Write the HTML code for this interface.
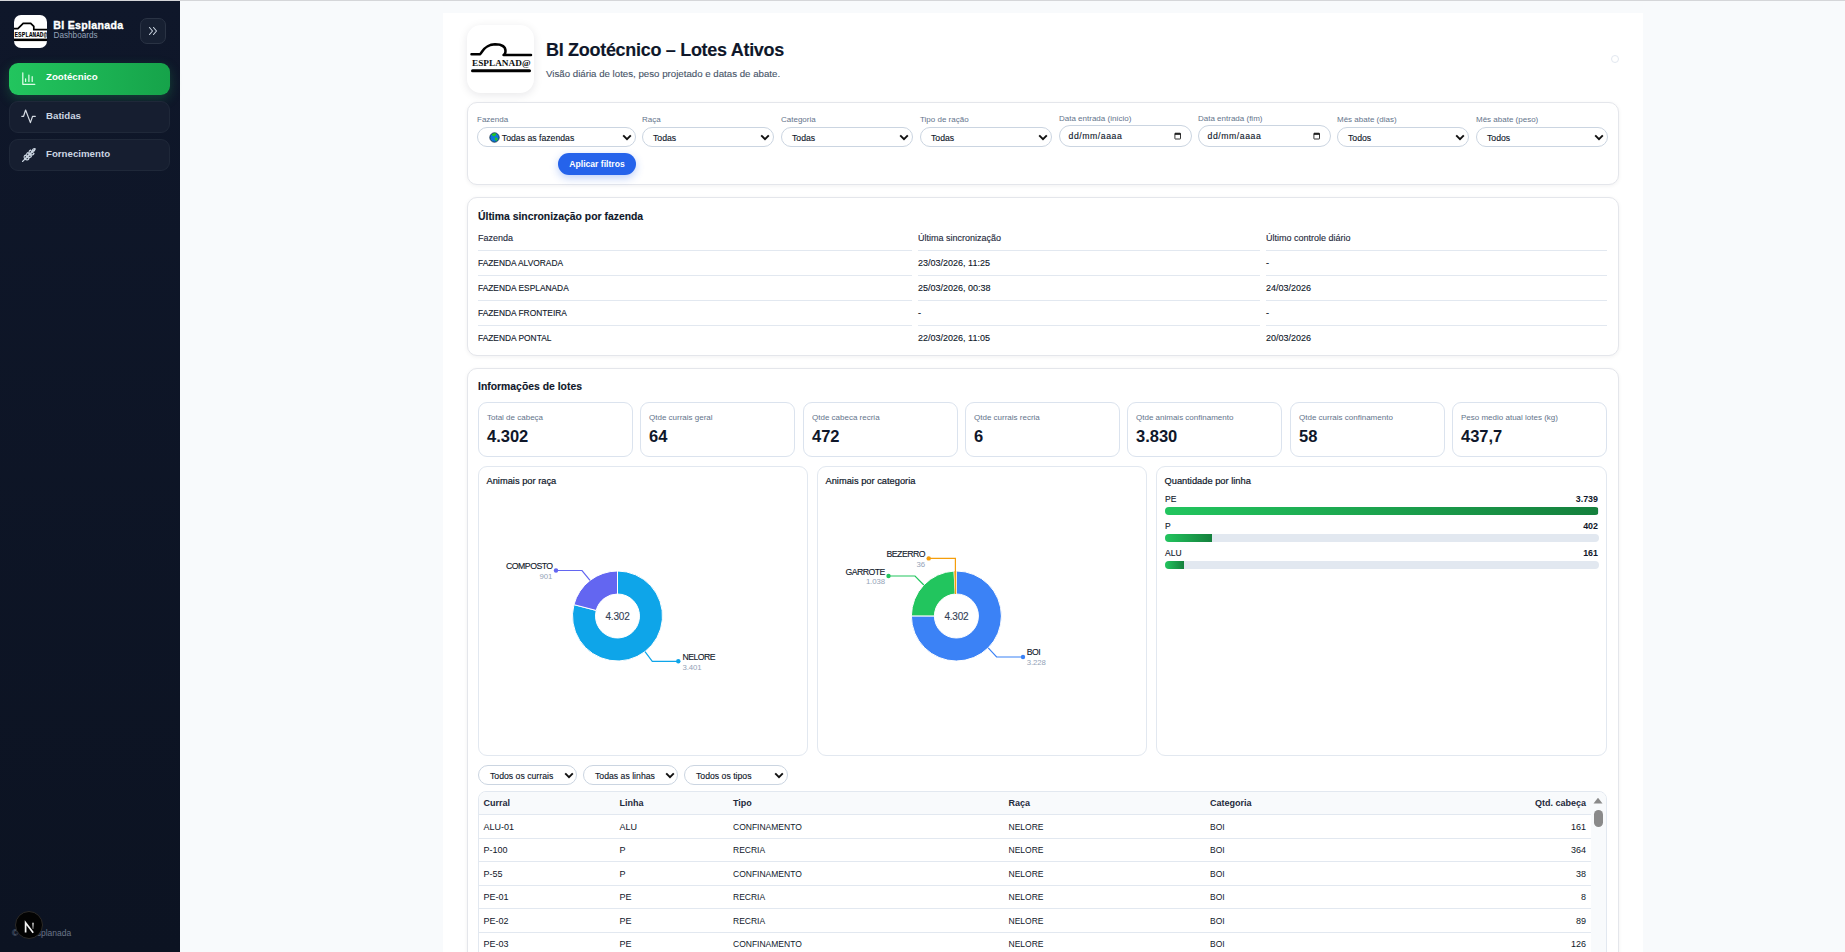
<!DOCTYPE html>
<html lang="pt-BR"><head><meta charset="utf-8"><title>BI Zootécnico</title>
<style>
*{box-sizing:border-box;margin:0;padding:0}
html,body{width:1845px;height:952px;overflow:hidden}
body{font-family:"Liberation Sans",sans-serif;background:#f8fafc;position:relative;color:#0f172a}
.abs{position:absolute}
#panel div,.card div,.ccard div,.sel span,.lbl,.kpi div{-webkit-text-stroke:0.12px currentColor}
.cttl{-webkit-text-stroke:0.2px currentColor!important}
.kv,.th2,.bv,.kl,.lbl{-webkit-text-stroke:0!important}
.ln{stroke:#0f172a;stroke-width:0.12px}.ct{stroke:#334155;stroke-width:0.12px}
.topline{left:0;top:0;width:1845px;height:1px;background:#d5d6d9}
#side{left:0;top:1px;width:180px;height:951px;background:linear-gradient(180deg,#0f172a 0%,#0c1322 100%)}
#panel{left:443px;top:13px;width:1200px;height:939px;background:#fff}
.card{position:absolute;border:1px solid #e4e6eb;border-radius:10px;background:#fff;box-shadow:0 1px 4px rgba(15,23,42,0.06)}
.lbl{position:absolute;font-size:8px;color:#64748b;white-space:nowrap}
.sel{position:absolute;height:20px;border:1px solid #cbd5e1;border-radius:10px;background:#fff;font-size:8.7px;color:#0f172a;white-space:nowrap}
.sel span{position:absolute;top:4.5px}
.chev{position:absolute;top:6px;width:10px;height:7px}
.th1{font-size:9px;color:#1e293b;white-space:nowrap}
.td1{font-size:9px;color:#0f172a;white-space:nowrap}
.bl{height:1px;background:#e2e8f0}
.kpi{position:absolute;top:33px;width:155px;height:55px;border:1px solid #dbe3ee;border-radius:9px;background:#fff}
.kl{position:absolute;left:8px;top:10px;font-size:8px;color:#64748b;white-space:nowrap}
.kv{position:absolute;left:8px;top:24px;font-size:16.5px;font-weight:bold;color:#0f172a;white-space:nowrap}
.ccard{position:absolute;border:1px solid #e2e8f0;border-radius:9px;background:#fff}
.cttl{position:absolute;left:7.5px;top:9px;font-size:9.3px;color:#0f172a;white-space:nowrap}
.ct{font-size:10px;letter-spacing:-0.2px;fill:#334155;font-family:"Liberation Sans",sans-serif}
.ln{font-size:8.7px;letter-spacing:-0.5px;fill:#0f172a;font-family:"Liberation Sans",sans-serif}
.lv{font-size:7.8px;letter-spacing:-0.1px;fill:#94a3b8;font-family:"Liberation Sans",sans-serif}
.bn{font-size:8.5px;color:#0f172a;white-space:nowrap}
.bv{font-size:8.9px;font-weight:bold;color:#0f172a;white-space:nowrap}
.th2{font-size:9px;font-weight:bold;color:#1e293b;white-space:nowrap}
.td2{font-size:9px;color:#0f172a;white-space:nowrap}
</style></head><body>
<div class="abs topline"></div>
<div id="side" class="abs">
 <div class="abs" style="left:14px;top:13.8px;width:33px;height:33px;border-radius:7px;background:#fff;overflow:hidden">
  <svg width="33" height="34" viewBox="0 0 33 34" style="position:absolute;left:0;top:0">
   <path d="M0 13.6 H3.9 L9.2 8.3 H16.7 L19.8 11.4 V14.6 H33" fill="none" stroke="#000" stroke-width="1.7"/>
   <rect x="0" y="23.6" width="33" height="2.5" fill="#000"/>
   <text x="0.5" y="21.6" font-family="Liberation Mono" font-size="6.4" font-weight="bold" fill="#000" textLength="32.5" lengthAdjust="spacingAndGlyphs">ESPLANAD@</text>
  </svg>
 </div>
 <div class="abs" style="left:53.3px;top:17.8px;font-size:10.6px;font-weight:bold;color:#fff;letter-spacing:0.3px;-webkit-text-stroke:0.35px #fff;white-space:nowrap">BI Esplanada</div>
 <div class="abs" style="left:53.5px;top:30px;font-size:8.2px;color:#94a3b8;white-space:nowrap">Dashboards</div>
 <div class="abs" style="left:140px;top:17px;width:26px;height:26px;border:1px solid #2a3344;border-radius:7px;background:#172032">
  <svg width="27" height="27" viewBox="0 0 27 27" style="position:absolute;left:-1px;top:-1px"><path d="M9.5 9.5 L12.5 13 L9.5 16.5 M13.5 9.5 L16.5 13 L13.5 16.5" fill="none" stroke="#cbd5e1" stroke-width="1.1" stroke-linecap="round" stroke-linejoin="round"/></svg>
 </div>
 <div class="abs" style="left:9px;top:62px;width:161px;height:32px;border-radius:9px;background:linear-gradient(90deg,#22c55e,#16a34a);box-shadow:0 4px 12px rgba(34,197,94,0.25)">
  <svg width="16" height="16" viewBox="0 0 16 16" style="position:absolute;left:12px;top:8px"><path d="M1.8 1.8 V13.3 H13.8 M4.6 10.4 V7.9 M7.9 10.4 V4 M11.2 10.4 V5.7" fill="none" stroke="#dcfce7" stroke-width="1.25" stroke-linecap="round" stroke-linejoin="round"/></svg>
  <div class="abs" style="left:37px;top:8px;font-size:9.7px;font-weight:bold;color:#fff;white-space:nowrap">Zootécnico</div>
 </div>
 <div class="abs" style="left:9px;top:100px;width:161px;height:32px;border-radius:9px;background:#161e30;border:1px solid #1f2839">
  <svg width="16" height="16" viewBox="0 0 16 16" style="position:absolute;left:11px;top:7px"><path d="M0.8 7.3 H2.6 L4.6 1 L9.4 13.6 L11.6 7.3 H14.3" fill="none" stroke="#d5dbe3" stroke-width="1.2" stroke-linecap="round" stroke-linejoin="round"/></svg>
  <div class="abs" style="left:36px;top:7.5px;font-size:9.7px;font-weight:bold;color:#cbd5e1;white-space:nowrap">Batidas</div>
 </div>
 <div class="abs" style="left:9px;top:138px;width:161px;height:32px;border-radius:9px;background:#161e30;border:1px solid #1f2839">
  <svg width="16" height="16" viewBox="0 0 16 16" style="position:absolute;left:11px;top:7px"><g fill="none" stroke="#cbd5e1" stroke-width="1.1" stroke-linecap="round" stroke-linejoin="round"><path d="M1.5 14.5 L14 2"/><path d="M4 12 C2.5 10.5 3 8.5 4.5 8 C6 9.5 6 11 4 12Z"/><path d="M6.5 9.5 C5 8 5.5 6 7 5.5 C8.5 7 8.5 8.5 6.5 9.5Z"/><path d="M9 7 C7.5 5.5 8 3.5 9.5 3 C11 4.5 11 6 9 7Z"/><path d="M4 12 C5.5 13.5 7.5 13 8 11.5 C6.5 10 5 10 4 12Z"/><path d="M6.5 9.5 C8 11 10 10.5 10.5 9 C9 7.5 7.5 7.5 6.5 9.5Z"/><path d="M9 7 C10.5 8.5 12.5 8 13 6.5 C11.5 5 10 5 9 7Z"/><path d="M11.5 4.5 C11 3 12 1.5 14 1.5 C14 3.5 12.5 4.5 11.5 4.5Z"/></g></svg>
  <div class="abs" style="left:36px;top:7.5px;font-size:9.7px;font-weight:bold;color:#cbd5e1;white-space:nowrap">Fornecimento</div>
 </div>
 <div class="abs" style="left:12px;top:927px;font-size:8.5px;color:#6b7688;white-space:nowrap">© BI Esplanada</div>
 <div class="abs" style="left:14.5px;top:910.3px;width:28px;height:28px;border-radius:50%;background:#030303;border:1px solid #2c2a28">
  <svg width="28" height="28" viewBox="0 0 28 28" style="position:absolute;left:-1px;top:-1px"><defs><linearGradient id="ng" gradientUnits="userSpaceOnUse" x1="0" y1="11.5" x2="0" y2="18"><stop offset="0" stop-color="#fff"/><stop offset="1" stop-color="#fff" stop-opacity="0.3"/></linearGradient></defs><path d="M10.6 21.5 V11.8 L18.2 21.8" fill="none" stroke="#f4f4f4" stroke-width="1.7"/><path d="M18 11.8 V18" fill="none" stroke="url(#ng)" stroke-width="1.4"/></svg>
 </div>
</div>
<div id="panel" class="abs">
 <div class="abs" style="left:24px;top:12px;width:67px;height:68px;border-radius:14px;background:#fff;box-shadow:0 2px 10px rgba(15,23,42,0.10)">
  <svg width="67" height="68" viewBox="0 0 67 68" style="position:absolute;left:0;top:0">
   <path d="M4.5 29.2 H13 C15.5 27.5 17 19.5 28 19.2 C36.5 19.2 38.5 23 38.5 26 C38.5 28.5 37.5 29.5 36.5 30 H64" fill="none" stroke="#000" stroke-width="2.5" stroke-linecap="round" stroke-linejoin="round"/>
   <text x="5" y="41.4" font-family="Liberation Serif" font-size="9" font-weight="bold" fill="#111" textLength="58.5" lengthAdjust="spacingAndGlyphs">ESPLANAD@</text>
   <rect x="4" y="44.2" width="60" height="3" rx="1.5" fill="#000"/>
  </svg>
 </div>
 <div class="abs" style="left:103px;top:27px;font-size:18px;letter-spacing:-0.3px;font-weight:bold;color:#0f172a;white-space:nowrap">BI Zootécnico – Lotes Ativos</div>
 <div class="abs" style="left:103px;top:55px;font-size:9.7px;color:#475569;white-space:nowrap">Visão diária de lotes, peso projetado e datas de abate.</div>
 <div class="abs" style="left:1168px;top:42px;width:8px;height:8px;border-radius:50%;border:1px solid #e2e8f0"></div>
</div>
<div class="card" style="left:467px;top:102px;width:1152px;height:83px">
 <div class="lbl" style="left:9px;top:12px">Fazenda</div>
 <div class="sel" style="left:9px;top:24px;width:159px"><svg width="11" height="11" viewBox="0 0 11 11" style="position:absolute;left:10.5px;top:4.3px"><circle cx="5.5" cy="5.5" r="4.7" fill="#0b78d8" stroke="#0d2440" stroke-width="0.8"/><path d="M2.6 2.4 C3.5 1.3 5.5 1 7.2 1.4 C7.4 2.4 6.6 3.6 5.3 4.2 C4.2 4.3 3.2 3.4 2.6 2.4Z" fill="#22c51f"/><path d="M5.8 5.6 C6.8 5.1 8 5.5 8.6 6.5 C8.6 7.8 7.9 8.9 7 9.3 C6.4 8.5 5.6 7.2 5.8 5.6Z" fill="#22c51f"/></svg><span style="left:23.8px">Todas as fazendas</span><svg class="chev" style="left:143.5px" viewBox="0 0 10 7"><path d="M1.2 1.3 L5 5.2 L8.8 1.3" fill="none" stroke="#111" stroke-width="1.9"/></svg></div>
 <div class="lbl" style="left:174px;top:12px">Raça</div>
 <div class="sel" style="left:174px;top:24px;width:132px"><span style="left:10px">Todas</span><svg class="chev" style="left:116.5px" viewBox="0 0 10 7"><path d="M1.2 1.3 L5 5.2 L8.8 1.3" fill="none" stroke="#111" stroke-width="1.9"/></svg></div>
 <div class="lbl" style="left:313px;top:12px">Categoria</div>
 <div class="sel" style="left:313px;top:24px;width:132px"><span style="left:10px">Todas</span><svg class="chev" style="left:116.5px" viewBox="0 0 10 7"><path d="M1.2 1.3 L5 5.2 L8.8 1.3" fill="none" stroke="#111" stroke-width="1.9"/></svg></div>
 <div class="lbl" style="left:452px;top:12px">Tipo de ração</div>
 <div class="sel" style="left:452px;top:24px;width:132px"><span style="left:10px">Todas</span><svg class="chev" style="left:116.5px" viewBox="0 0 10 7"><path d="M1.2 1.3 L5 5.2 L8.8 1.3" fill="none" stroke="#111" stroke-width="1.9"/></svg></div>
 <div class="lbl" style="left:591px;top:11px">Data entrada (início)</div>
 <div class="sel" style="left:591px;top:22px;width:133px;height:22px;border-radius:11px"><span style="left:8.5px;top:5px;letter-spacing:0.55px">dd/mm/aaaa</span><svg width="8" height="8" viewBox="0 0 8 8" style="position:absolute;left:113.5px;top:6px"><rect x="0.9" y="1.2" width="5.6" height="5.8" rx="0.4" fill="none" stroke="#111" stroke-width="0.85"/><rect x="0.9" y="1.2" width="5.6" height="1.6" fill="#111"/></svg></div>
 <div class="lbl" style="left:730px;top:11px">Data entrada (fim)</div>
 <div class="sel" style="left:730px;top:22px;width:133px;height:22px;border-radius:11px"><span style="left:8.5px;top:5px;letter-spacing:0.55px">dd/mm/aaaa</span><svg width="8" height="8" viewBox="0 0 8 8" style="position:absolute;left:113.5px;top:6px"><rect x="0.9" y="1.2" width="5.6" height="5.8" rx="0.4" fill="none" stroke="#111" stroke-width="0.85"/><rect x="0.9" y="1.2" width="5.6" height="1.6" fill="#111"/></svg></div>
 <div class="lbl" style="left:869px;top:12px">Mês abate (dias)</div>
 <div class="sel" style="left:869px;top:24px;width:132px"><span style="left:10px">Todos</span><svg class="chev" style="left:116.5px" viewBox="0 0 10 7"><path d="M1.2 1.3 L5 5.2 L8.8 1.3" fill="none" stroke="#111" stroke-width="1.9"/></svg></div>
 <div class="lbl" style="left:1008px;top:12px">Mês abate (peso)</div>
 <div class="sel" style="left:1008px;top:24px;width:132px"><span style="left:10px">Todos</span><svg class="chev" style="left:116.5px" viewBox="0 0 10 7"><path d="M1.2 1.3 L5 5.2 L8.8 1.3" fill="none" stroke="#111" stroke-width="1.9"/></svg></div>
 <div class="abs" style="left:90px;top:50px;width:78px;height:22px;border-radius:11px;background:#2563eb;box-shadow:0 3px 8px rgba(37,99,235,0.30);color:#fff;font-size:8.6px;font-weight:bold;text-align:center;line-height:22px;-webkit-text-stroke:0!important">Aplicar filtros</div>
</div>

<div class="card" style="left:467px;top:197px;width:1152px;height:159px">
 <div class="abs" style="left:10px;top:13.3px;font-size:10.4px;font-weight:bold;color:#0f172a;white-space:nowrap">Última sincronização por fazenda</div>
 <div class="abs th1" style="left:10px;top:35px;width:434px">Fazenda</div>
 <div class="abs th1" style="left:450px;top:35px;width:342px">Última sincronização</div>
 <div class="abs th1" style="left:798px;top:35px;width:341px">Último controle diário</div>
 <div class="abs bl" style="left:10px;top:52px;width:434px"></div>
 <div class="abs td1" style="left:10px;top:59.5px;font-size:8.4px">FAZENDA ALVORADA</div>
 <div class="abs bl" style="left:450px;top:52px;width:342px"></div>
 <div class="abs td1" style="left:450px;top:59.5px">23/03/2026, 11:25</div>
 <div class="abs bl" style="left:798px;top:52px;width:341px"></div>
 <div class="abs td1" style="left:798px;top:59.5px">-</div>
 <div class="abs bl" style="left:10px;top:77px;width:434px"></div>
 <div class="abs td1" style="left:10px;top:84.5px;font-size:8.4px">FAZENDA ESPLANADA</div>
 <div class="abs bl" style="left:450px;top:77px;width:342px"></div>
 <div class="abs td1" style="left:450px;top:84.5px">25/03/2026, 00:38</div>
 <div class="abs bl" style="left:798px;top:77px;width:341px"></div>
 <div class="abs td1" style="left:798px;top:84.5px">24/03/2026</div>
 <div class="abs bl" style="left:10px;top:102px;width:434px"></div>
 <div class="abs td1" style="left:10px;top:109.5px;font-size:8.4px">FAZENDA FRONTEIRA</div>
 <div class="abs bl" style="left:450px;top:102px;width:342px"></div>
 <div class="abs td1" style="left:450px;top:109.5px">-</div>
 <div class="abs bl" style="left:798px;top:102px;width:341px"></div>
 <div class="abs td1" style="left:798px;top:109.5px">-</div>
 <div class="abs bl" style="left:10px;top:127px;width:434px"></div>
 <div class="abs td1" style="left:10px;top:134.5px;font-size:8.4px">FAZENDA PONTAL</div>
 <div class="abs bl" style="left:450px;top:127px;width:342px"></div>
 <div class="abs td1" style="left:450px;top:134.5px">22/03/2026, 11:05</div>
 <div class="abs bl" style="left:798px;top:127px;width:341px"></div>
 <div class="abs td1" style="left:798px;top:134.5px">20/03/2026</div>
</div>
<div class="card" style="left:467px;top:368px;width:1152px;height:700px">
 <div class="abs" style="left:10px;top:11.5px;font-size:10.4px;font-weight:bold;color:#0f172a;white-space:nowrap">Informações de lotes</div>
 <div class="kpi" style="left:10px"><div class="kl">Total de cabeça</div><div class="kv">4.302</div></div>
 <div class="kpi" style="left:172px"><div class="kl">Qtde currais geral</div><div class="kv">64</div></div>
 <div class="kpi" style="left:335px"><div class="kl">Qtde cabeca recria</div><div class="kv">472</div></div>
 <div class="kpi" style="left:497px"><div class="kl">Qtde currais recria</div><div class="kv">6</div></div>
 <div class="kpi" style="left:659px"><div class="kl">Qtde animais confinamento</div><div class="kv">3.830</div></div>
 <div class="kpi" style="left:822px"><div class="kl">Qtde currais confinamento</div><div class="kv">58</div></div>
 <div class="kpi" style="left:984px"><div class="kl">Peso medio atual lotes (kg)</div><div class="kv">437,7</div></div>
</div>
<div class="ccard" style="left:478px;top:466px;width:330px;height:290px"><div class="cttl">Animais por raça</div></div>
<div class="ccard" style="left:817px;top:466px;width:330px;height:290px"><div class="cttl">Animais por categoria</div></div>
<div class="ccard" style="left:1156px;top:466px;width:451px;height:290px"><div class="cttl">Quantidade por linha</div>
 <div class="abs bn" style="left:8px;top:26.8px">PE</div><div class="abs bv" style="right:8px;top:26.8px">3.739</div>
 <div class="abs" style="left:8px;top:40px;width:434px;height:8px;border-radius:4px;background:#e2e8f0;overflow:hidden"><div style="width:433.0px;height:8px;background:linear-gradient(90deg,#22c55e,#15803d)"></div></div>
 <div class="abs bn" style="left:8px;top:53.8px">P</div><div class="abs bv" style="right:8px;top:53.8px">402</div>
 <div class="abs" style="left:8px;top:67px;width:434px;height:8px;border-radius:4px;background:#e2e8f0;overflow:hidden"><div style="width:46.6px;height:8px;background:linear-gradient(90deg,#22c55e,#15803d)"></div></div>
 <div class="abs bn" style="left:8px;top:80.8px">ALU</div><div class="abs bv" style="right:8px;top:80.8px">161</div>
 <div class="abs" style="left:8px;top:94px;width:434px;height:8px;border-radius:4px;background:#e2e8f0;overflow:hidden"><div style="width:18.6px;height:8px;background:linear-gradient(90deg,#22c55e,#15803d)"></div></div>
</div>
<div class="sel" style="left:478px;top:765px;width:99px"><span style="left:11px">Todos os currais</span><svg class="chev" style="left:85px;top:6px" viewBox="0 0 10 7"><path d="M1.2 1.3 L5 5.2 L8.8 1.3" fill="none" stroke="#111" stroke-width="1.9"/></svg></div>
<div class="sel" style="left:583px;top:765px;width:95px"><span style="left:11px">Todas as linhas</span><svg class="chev" style="left:81px;top:6px" viewBox="0 0 10 7"><path d="M1.2 1.3 L5 5.2 L8.8 1.3" fill="none" stroke="#111" stroke-width="1.9"/></svg></div>
<div class="sel" style="left:684px;top:765px;width:104px"><span style="left:11px">Todos os tipos</span><svg class="chev" style="left:89px;top:6px" viewBox="0 0 10 7"><path d="M1.2 1.3 L5 5.2 L8.8 1.3" fill="none" stroke="#111" stroke-width="1.9"/></svg></div>
<div class="abs" style="left:478px;top:791px;width:1129px;height:400px;border:1px solid #e2e8f0;border-radius:8px;overflow:hidden;background:#fff">
 <div class="abs" style="left:0;top:0;width:1112px;height:23px;background:#f8fafc;border-bottom:1px solid #e2e8f0"></div>
 <div class="abs th2" style="left:4.6px;top:6px">Curral</div>
 <div class="abs th2" style="left:140.6px;top:6px">Linha</div>
 <div class="abs th2" style="left:254.0px;top:6px">Tipo</div>
 <div class="abs th2" style="left:529.5px;top:6px">Raça</div>
 <div class="abs th2" style="left:731.0px;top:6px">Categoria</div>
 <div class="abs th2" style="right:20px;top:6px">Qtd. cabeça</div>
 <div class="abs" style="left:0;top:45.9px;width:1112px;height:1px;background:#e2e8f0"></div>
 <div class="abs td2" style="left:4.6px;top:29.5px">ALU-01</div>
 <div class="abs td2" style="left:140.6px;top:29.5px">ALU</div>
 <div class="abs td2" style="left:254.0px;top:29.5px;font-size:8.5px">CONFINAMENTO</div>
 <div class="abs td2" style="left:529.5px;top:29.5px;font-size:8.5px">NELORE</div>
 <div class="abs td2" style="left:731.0px;top:29.5px;font-size:8.5px">BOI</div>
 <div class="abs td2" style="right:20px;top:29.5px">161</div>
 <div class="abs" style="left:0;top:69.4px;width:1112px;height:1px;background:#e2e8f0"></div>
 <div class="abs td2" style="left:4.6px;top:53.0px">P-100</div>
 <div class="abs td2" style="left:140.6px;top:53.0px">P</div>
 <div class="abs td2" style="left:254.0px;top:53.0px;font-size:8.5px">RECRIA</div>
 <div class="abs td2" style="left:529.5px;top:53.0px;font-size:8.5px">NELORE</div>
 <div class="abs td2" style="left:731.0px;top:53.0px;font-size:8.5px">BOI</div>
 <div class="abs td2" style="right:20px;top:53.0px">364</div>
 <div class="abs" style="left:0;top:92.9px;width:1112px;height:1px;background:#e2e8f0"></div>
 <div class="abs td2" style="left:4.6px;top:76.5px">P-55</div>
 <div class="abs td2" style="left:140.6px;top:76.5px">P</div>
 <div class="abs td2" style="left:254.0px;top:76.5px;font-size:8.5px">CONFINAMENTO</div>
 <div class="abs td2" style="left:529.5px;top:76.5px;font-size:8.5px">NELORE</div>
 <div class="abs td2" style="left:731.0px;top:76.5px;font-size:8.5px">BOI</div>
 <div class="abs td2" style="right:20px;top:76.5px">38</div>
 <div class="abs" style="left:0;top:116.4px;width:1112px;height:1px;background:#e2e8f0"></div>
 <div class="abs td2" style="left:4.6px;top:100.0px">PE-01</div>
 <div class="abs td2" style="left:140.6px;top:100.0px">PE</div>
 <div class="abs td2" style="left:254.0px;top:100.0px;font-size:8.5px">RECRIA</div>
 <div class="abs td2" style="left:529.5px;top:100.0px;font-size:8.5px">NELORE</div>
 <div class="abs td2" style="left:731.0px;top:100.0px;font-size:8.5px">BOI</div>
 <div class="abs td2" style="right:20px;top:100.0px">8</div>
 <div class="abs" style="left:0;top:139.9px;width:1112px;height:1px;background:#e2e8f0"></div>
 <div class="abs td2" style="left:4.6px;top:123.5px">PE-02</div>
 <div class="abs td2" style="left:140.6px;top:123.5px">PE</div>
 <div class="abs td2" style="left:254.0px;top:123.5px;font-size:8.5px">RECRIA</div>
 <div class="abs td2" style="left:529.5px;top:123.5px;font-size:8.5px">NELORE</div>
 <div class="abs td2" style="left:731.0px;top:123.5px;font-size:8.5px">BOI</div>
 <div class="abs td2" style="right:20px;top:123.5px">89</div>
 <div class="abs" style="left:0;top:163.4px;width:1112px;height:1px;background:#e2e8f0"></div>
 <div class="abs td2" style="left:4.6px;top:147.0px">PE-03</div>
 <div class="abs td2" style="left:140.6px;top:147.0px">PE</div>
 <div class="abs td2" style="left:254.0px;top:147.0px;font-size:8.5px">CONFINAMENTO</div>
 <div class="abs td2" style="left:529.5px;top:147.0px;font-size:8.5px">NELORE</div>
 <div class="abs td2" style="left:731.0px;top:147.0px;font-size:8.5px">BOI</div>
 <div class="abs td2" style="right:20px;top:147.0px">126</div>
 <div class="abs" style="left:0;top:186.9px;width:1112px;height:1px;background:#e2e8f0"></div>
 <div class="abs td2" style="left:4.6px;top:170.5px">PE-04</div>
 <div class="abs td2" style="left:140.6px;top:170.5px">PE</div>
 <div class="abs td2" style="left:254.0px;top:170.5px;font-size:8.5px">CONFINAMENTO</div>
 <div class="abs td2" style="left:529.5px;top:170.5px;font-size:8.5px">NELORE</div>
 <div class="abs td2" style="left:731.0px;top:170.5px;font-size:8.5px">BOI</div>
 <div class="abs td2" style="right:20px;top:170.5px">120</div>
 <div class="abs" style="left:1112px;top:0;width:16px;height:400px;background:#f8fafc"></div>
 <svg class="abs" style="left:1114px;top:5px" width="10" height="7" viewBox="0 0 10 7"><path d="M0.5 6.5 L5 0.8 L9.5 6.5Z" fill="#8a8a8a"/></svg>
 <div class="abs" style="left:1115px;top:18px;width:9px;height:17px;border-radius:4.5px;background:#8a8a8a"></div>
</div>
<svg class="abs" style="left:0;top:0" width="1845" height="952" viewBox="0 0 1845 952">
<path d="M617.50 571.00 A45 45 0 1 1 573.95 604.65 L596.21 610.45 A22 22 0 1 0 617.50 594.00Z" fill="#0ea5e9" stroke="#fff" stroke-width="1"/>
<path d="M573.95 604.65 A45 45 0 0 1 617.50 571.00 L617.50 594.00 A22 22 0 0 0 596.21 610.45Z" fill="#6366f1" stroke="#fff" stroke-width="1"/>
<path d="M590 580.4 L582 570.5 H556" fill="none" stroke="#6366f1" stroke-width="1.2"/><circle cx="556" cy="570.5" r="2.2" fill="#6366f1"/>
<path d="M645 651.6 L652.3 661.3 H678.3" fill="none" stroke="#0ea5e9" stroke-width="1.2"/><circle cx="678.3" cy="661.3" r="2.2" fill="#0ea5e9"/>
<text x="617.5" y="620" text-anchor="middle" class="ct">4.302</text>
<text x="552.6" y="569" text-anchor="end" class="ln">COMPOSTO</text><text x="552.3" y="579" text-anchor="end" class="lv">901</text>
<text x="682.4" y="660" class="ln">NELORE</text><text x="682.4" y="670.2" class="lv">3.401</text>
<path d="M956.40 571.00 A45 45 0 1 1 911.40 615.90 L934.40 615.95 A22 22 0 1 0 956.40 594.00Z" fill="#3b82f6" stroke="#fff" stroke-width="1"/>
<path d="M911.40 615.90 A45 45 0 0 1 954.04 571.06 L955.24 594.03 A22 22 0 0 0 934.40 615.95Z" fill="#22c55e" stroke="#fff" stroke-width="1"/>
<path d="M954.04 571.06 A45 45 0 0 1 956.40 571.00 L956.40 594.00 A22 22 0 0 0 955.24 594.03Z" fill="#f59e0b" stroke="#fff" stroke-width="0.5"/>
<path d="M988.2 647.8 L996.6 657 H1023" fill="none" stroke="#3b82f6" stroke-width="1.2"/><circle cx="1023" cy="657" r="2.2" fill="#3b82f6"/>
<path d="M923.8 585 L915 576 H888.5" fill="none" stroke="#22c55e" stroke-width="1.2"/><circle cx="888.5" cy="576" r="2.2" fill="#22c55e"/>
<path d="M955.4 594 V558.4 H928.7" fill="none" stroke="#f59e0b" stroke-width="1.2"/><circle cx="928.7" cy="558.4" r="2.2" fill="#f59e0b"/>
<text x="956.4" y="620" text-anchor="middle" class="ct">4.302</text>
<text x="925" y="557" text-anchor="end" class="ln">BEZERRO</text><text x="925" y="566.8" text-anchor="end" class="lv">36</text>
<text x="884.9" y="575" text-anchor="end" class="ln">GARROTE</text><text x="884.9" y="584.4" text-anchor="end" class="lv">1.038</text>
<text x="1026.8" y="654.7" class="ln">BOI</text><text x="1026.8" y="664.7" class="lv">3.228</text>
</svg>
</body></html>
